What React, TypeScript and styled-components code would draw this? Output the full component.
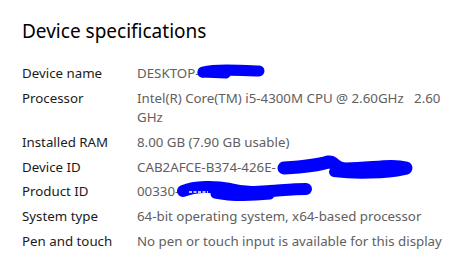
import React from "react";
import styled, { createGlobalStyle } from "styled-components";

const Global = createGlobalStyle`
  html, body { margin: 0; padding: 0; background: #ffffff; }
  body { font-family: "Noto Sans", "Open Sans", sans-serif; -webkit-font-smoothing: antialiased; }
`;

const Page = styled.div`
  width: 470px;
  height: 267px;
  box-sizing: border-box;
  padding: 17px 0 0 22px;
  position: relative;
  overflow: hidden;
  background: #fff;
`;

const Title = styled.h1`
  margin: 0 0 19px 0;
  font-size: 19px;
  font-weight: 400;
  line-height: 28px;
  color: #000;
`;

const Specs = styled.div`
  display: grid;
  grid-template-columns: 115px 320px;
  row-gap: 5.85px;
`;

const Label = styled.div`
  font-size: 13.3px;
  line-height: 19px;
  color: #1a1a1a;
`;

const Value = styled.div`
  font-size: 13.3px;
  line-height: 19px;
  color: #606060;
  white-space: pre-wrap;
`;

const Redaction = styled.svg<{ $left: number; $top: number }>`
  position: absolute;
  left: ${(p) => p.$left}px;
  top: ${(p) => p.$top}px;
  overflow: visible;
`;

const rows: [string, string][] = [
  ["Device name", "DESKTOP-"],
  ["Processor", "Intel(R) Core(TM) i5-4300M CPU @ 2.60GHz   2.60 GHz"],
  ["Installed RAM", "8.00 GB (7.90 GB usable)"],
  ["Device ID", "CAB2AFCE-B374-426E-"],
  ["Product ID", "00330-"],
  ["System type", "64-bit operating system, x64-based processor"],
  ["Pen and touch", "No pen or touch input is available for this display"],
];

export default function App() {
  return (
    <>
      <Global />
      <Page>
        <Title>Device specifications</Title>
        <Specs>
          {rows.map(([k, v]) => (
            <React.Fragment key={k}>
              <Label>{k}</Label>
              <Value>{v}</Value>
            </React.Fragment>
          ))}
        </Specs>
        <Redaction $left={196} $top={64} width={70} height={16} viewBox="0 0 70 16">
          <path d="M7 8 C 20 5, 40 6, 63 7" stroke="#0000ff" strokeWidth={11} strokeLinecap="round" fill="none" />
          <path d="M6 9 L 30 10" stroke="#0000ff" strokeWidth={9} strokeLinecap="round" fill="none" />
        </Redaction>
        <Redaction $left={276} $top={155} width={140} height={26} viewBox="0 0 140 26">
          <path d="M8 13 C 25 12, 40 11, 52 7 C 60 6, 56 13, 70 14 C 95 14, 115 9, 130 13" stroke="#0000ff" strokeWidth={13} strokeLinecap="round" fill="none" />
          <path d="M58 17 C 80 20, 110 19, 128 15" stroke="#0000ff" strokeWidth={10} strokeLinecap="round" fill="none" />
        </Redaction>
        <Redaction $left={175} $top={180} width={140} height={22} viewBox="0 0 140 22">
          <path d="M8 11 C 20 6, 40 6, 55 9 C 70 13, 80 12, 95 11 C 110 10, 120 9, 131 9" stroke="#0000ff" strokeWidth={12} strokeLinecap="round" fill="none" />
          <path d="M40 14 C 55 17, 75 17, 95 15" stroke="#0000ff" strokeWidth={9} strokeLinecap="round" fill="none" />
          <path d="M14 12 L 33 12" stroke="#ffffff" strokeWidth={1.6} strokeDasharray="3 1.5" fill="none" />
        </Redaction>
      </Page>
    </>
  );
}
